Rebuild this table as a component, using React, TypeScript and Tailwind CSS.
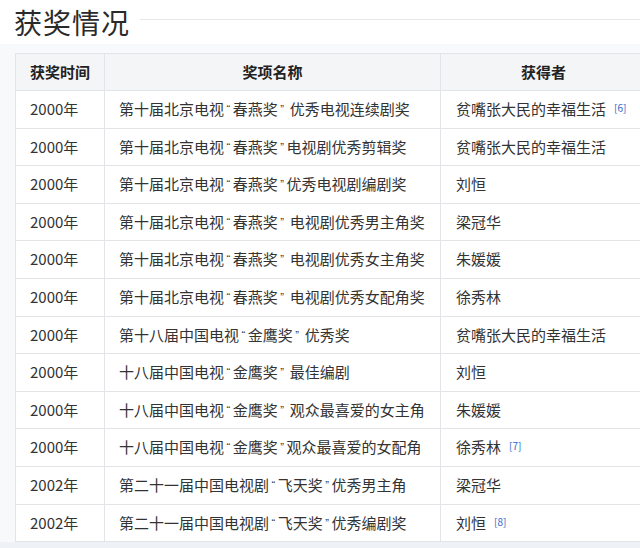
const rows: [string, string, string, string?][] = [
  ['2000年', '第十届北京电视“春燕奖” 优秀电视连续剧奖', '贫嘴张大民的幸福生活', '[6]'],
  ['2000年', '第十届北京电视“春燕奖”电视剧优秀剪辑奖', '贫嘴张大民的幸福生活'],
  ['2000年', '第十届北京电视“春燕奖”优秀电视剧编剧奖', '刘恒'],
  ['2000年', '第十届北京电视“春燕奖” 电视剧优秀男主角奖', '梁冠华'],
  ['2000年', '第十届北京电视“春燕奖” 电视剧优秀女主角奖', '朱媛媛'],
  ['2000年', '第十届北京电视“春燕奖” 电视剧优秀女配角奖', '徐秀林'],
  ['2000年', '第十八届中国电视“金鹰奖” 优秀奖', '贫嘴张大民的幸福生活'],
  ['2000年', '十八届中国电视“金鹰奖” 最佳编剧', '刘恒'],
  ['2000年', '十八届中国电视“金鹰奖” 观众最喜爱的女主角', '朱媛媛'],
  ['2000年', '十八届中国电视“金鹰奖”观众最喜爱的女配角', '徐秀林', '[7]'],
  ['2002年', '第二十一届中国电视剧“飞天奖”优秀男主角', '梁冠华'],
  ['2002年', '第二十一届中国电视剧“飞天奖”优秀编剧奖', '刘恒', '[8]'],
]

// the quotes in the screenshot are small latin ones, not full-width
function AwardName({ text }: { text: string }) {
  const parts = text.split(/([“”])/)
  return (
    <>
      {parts.map((p, i) =>
        p === '“' || p === '”' ? (
          <span key={i} className="font-['Liberation_Sans'] text-[11px] mx-[2.5px] relative -top-[2px]">
            {p}
          </span>
        ) : (
          <span key={i}>{p}</span>
        )
      )}
    </>
  )
}

export default function App() {
  return (
    <div
      className="w-[640px] h-[548px] overflow-hidden bg-[#f8f9fa] text-[#333]"
      style={{ fontFamily: '"Noto Sans CJK SC", "Noto Sans", sans-serif' }}
    >
      <div className="flex items-center h-[44px] pl-[14px] bg-white">
        <h2 className="text-[28px] leading-none text-[#2a2a2a] font-normal tracking-[1px]">获奖情况</h2>
        <div className="flex-1 ml-[10px] h-px bg-[#e6e7ea] -mt-[6px]" />
      </div>
      <div className="pl-[15px] pt-[9px] overflow-hidden">
        <table className="w-[640px] border-collapse table-fixed bg-white text-[15px]">
          <colgroup>
            <col className="w-[89px]" />
            <col className="w-[336px]" />
            <col />
          </colgroup>
          <thead>
            <tr className="h-[37px] bg-[#f4f5f7]">
              <th className="border border-[#e2e4e8] font-bold text-[#222] text-center">获奖时间</th>
              <th className="border border-[#e2e4e8] font-bold text-[#222] text-center">奖项名称</th>
              <th className="border border-[#e2e4e8] font-bold text-[#222] text-center pr-[8px]">获得者</th>
            </tr>
          </thead>
          <tbody>
            {rows.map((r, i) => (
              <tr key={i} className="h-[37.6px]">
                <td className="border border-[#e2e4e8] pl-[14px] whitespace-nowrap">{r[0]}</td>
                <td className="border border-[#e2e4e8] pl-[14px] whitespace-pre">
                  <AwardName text={r[1]} />
                </td>
                <td className="border border-[#e2e4e8] pl-[15px] whitespace-nowrap">
                  {r[2]}
                  {r[3] && (
                    <sup className="ml-[8px] text-[10px] text-[#3366cc] relative -top-[3px]">{r[3]}</sup>
                  )}
                </td>
              </tr>
            ))}
          </tbody>
        </table>
      </div>
      <div className="h-[10px] bg-[#eef1f6]" />
    </div>
  )
}
